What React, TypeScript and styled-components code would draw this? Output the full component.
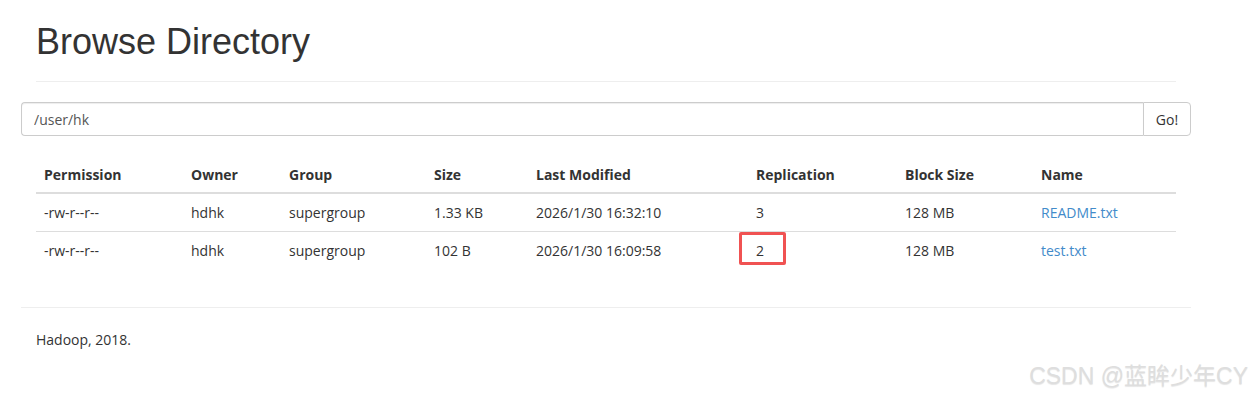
import React from 'react';
import styled, { createGlobalStyle } from 'styled-components';

const GlobalStyle = createGlobalStyle`
  html, body {
    margin: 0;
    padding: 0;
    background: #fff;
  }
  body {
    font-family: 'Open Sans', 'Liberation Sans', sans-serif;
    font-size: 14px;
    color: #333;
  }
`;

const Page = styled.div`
  position: relative;
  width: 1251px;
  height: 398px;
  overflow: hidden;
`;

const Container = styled.div`
  width: 1170px;
  margin-left: 21px;
  padding-top: 22px;
`;

const PageHeader = styled.div`
  margin: 0 15px;
  padding-bottom: 19px;
  border-bottom: 1px solid #eee;
`;

const Title = styled.h1`
  margin: 0;
  font-family: 'Liberation Sans', Arial, sans-serif;
  font-weight: 400;
  font-size: 36px;
  line-height: 40px;
  color: #333;
`;

const InputGroup = styled.div`
  display: flex;
  margin-top: 20px;
  height: 34px;
`;

const PathInput = styled.input`
  flex: 1;
  box-sizing: border-box;
  height: 34px;
  padding: 6px 12px;
  border: 1px solid #ccc;
  border-right: none;
  border-radius: 4px 0 0 4px;
  font-family: inherit;
  font-size: 14px;
  color: #555;
  outline: none;
  box-shadow: inset 0 1px 1px rgba(0, 0, 0, 0.075);
`;

const GoButton = styled.button`
  box-sizing: border-box;
  width: 48px;
  height: 34px;
  border: 1px solid #ccc;
  border-radius: 0 4px 4px 0;
  background: #fff;
  font-family: inherit;
  font-size: 14px;
  color: #333;
  padding: 0;
`;

const Table = styled.table`
  width: 1140px;
  margin: 20px 15px 0;
  border-collapse: collapse;
  border-spacing: 0;
  table-layout: fixed;

  th {
    box-sizing: border-box;
    text-align: left;
    font-weight: 700;
    padding: 0 8px;
    height: 37px;
    border-bottom: 2px solid #ddd;
  }
  td {
    padding: 0 8px;
    height: 37px;
    border-top: 1px solid #ddd;
  }
  tbody tr:first-child td {
    border-top: none;
  }
`;

const Link = styled.a`
  color: #428bca;
  text-decoration: none;
`;

const Marked = styled.span`
  position: relative;
  display: inline-block;
`;

const Highlight = styled.span`
  position: absolute;
  left: -17px;
  top: -9px;
  width: 47px;
  height: 33px;
  box-sizing: border-box;
  border: 3px solid #f05252;
  border-radius: 2px;
`;

const Footer = styled.div`
  margin-top: 38px;
  border-top: 1px solid #eee;
  padding: 22px 15px 0;
  line-height: 20px;
`;

const Watermark = styled.div`
  position: absolute;
  right: 3px;
  bottom: 7px;
  font-family: 'Liberation Sans', 'Noto Sans CJK SC', sans-serif;
  font-size: 23px;
  color: #dedede;
  text-shadow: 0 1px 1px rgba(0, 0, 0, 0.1);
`;

const columns = [
  { label: 'Permission', width: 147 },
  { label: 'Owner', width: 98 },
  { label: 'Group', width: 145 },
  { label: 'Size', width: 102 },
  { label: 'Last Modified', width: 220 },
  { label: 'Replication', width: 149 },
  { label: 'Block Size', width: 136 },
  { label: 'Name', width: 143 },
];

const files = [
  {
    permission: '-rw-r--r--',
    owner: 'hdhk',
    group: 'supergroup',
    size: '1.33 KB',
    modified: '2026/1/30 16:32:10',
    replication: '3',
    blockSize: '128 MB',
    name: 'README.txt',
    marked: false,
  },
  {
    permission: '-rw-r--r--',
    owner: 'hdhk',
    group: 'supergroup',
    size: '102 B',
    modified: '2026/1/30 16:09:58',
    replication: '2',
    blockSize: '128 MB',
    name: 'test.txt',
    marked: true,
  },
];

export default function App() {
  return (
    <Page>
      <GlobalStyle />
      <Container>
        <PageHeader>
          <Title>Browse Directory</Title>
        </PageHeader>
        <InputGroup>
          <PathInput defaultValue="/user/hk" />
          <GoButton>Go!</GoButton>
        </InputGroup>
        <Table>
          <thead>
            <tr>
              {columns.map((c) => (
                <th key={c.label} style={{ width: c.width }}>
                  {c.label}
                </th>
              ))}
            </tr>
          </thead>
          <tbody>
            {files.map((f) => (
              <tr key={f.name}>
                <td>{f.permission}</td>
                <td>{f.owner}</td>
                <td>{f.group}</td>
                <td>{f.size}</td>
                <td>{f.modified}</td>
                <td>
                  {f.marked ? (
                    <Marked>
                      {f.replication}
                      <Highlight />
                    </Marked>
                  ) : (
                    f.replication
                  )}
                </td>
                <td>{f.blockSize}</td>
                <td>
                  <Link href="#">{f.name}</Link>
                </td>
              </tr>
            ))}
          </tbody>
        </Table>
        <Footer>Hadoop, 2018.</Footer>
      </Container>
      <Watermark>CSDN @蓝眸少年CY</Watermark>
    </Page>
  );
}
